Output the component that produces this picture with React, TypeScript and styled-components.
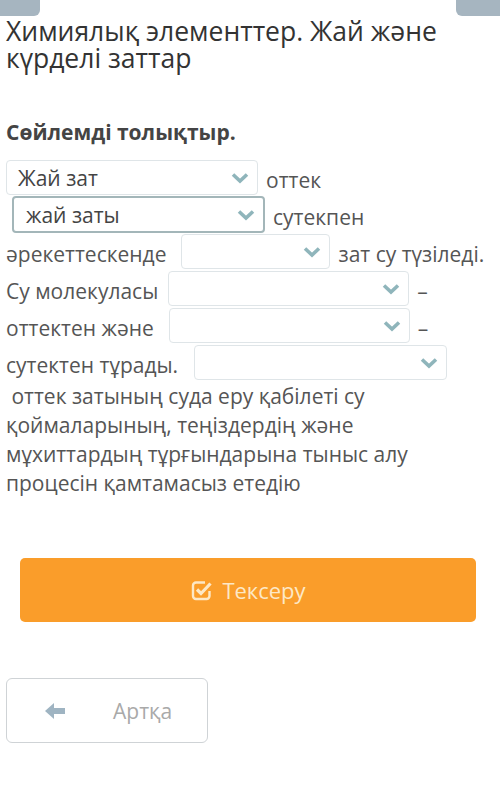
import React from "react";
import styled, { createGlobalStyle } from "styled-components";

const GlobalStyle = createGlobalStyle`
  html, body {
    margin: 0;
    padding: 0;
    background: #fff;
  }
  body {
    font-family: "Open Sans", "Noto Sans", "DejaVu Sans", sans-serif;
    color: #4a4a4a;
  }
`;

const Page = styled.div`
  width: 500px;
  min-height: 806px;
  overflow: hidden;
`;

const TopBar = styled.div`
  display: flex;
  justify-content: space-between;
  height: 16px;
`;

const Corner = styled.div<{ side: "left" | "right" }>`
  width: ${(p) => (p.side === "left" ? 40 : 44)}px;
  height: 16px;
  background: #a6b5c0;
  border-bottom-${(p) => (p.side === "left" ? "right" : "left")}-radius: 6px;
`;

const Title = styled.h1`
  margin: 2px 0 0;
  padding: 0 6px;
  font-size: 26.5px;
  line-height: 27px;
  font-weight: 400;
  color: #333;
`;

const Task = styled.h2`
  margin: 47px 0 0;
  padding: 0 6px;
  font-size: 21px;
  line-height: 26px;
  font-weight: 700;
  color: #444;
`;

const Sentence = styled.div`
  margin-top: 14px;
  padding: 0 6px;
  font-size: 21px;
  color: #555;
`;

const Line = styled.div<{ indent?: number }>`
  display: flex;
  align-items: center;
  gap: 8px;
  height: 37px;
  padding-left: ${(p) => p.indent ?? 0}px;
`;

const Word = styled.span<{ after?: number }>`
  white-space: nowrap;
  line-height: 28px;
  padding-top: 4px;
  margin-right: ${(p) => p.after ?? 0}px;
`;

const SelectBox = styled.div<{ w: number; focused?: boolean }>`
  box-sizing: border-box;
  display: flex;
  align-items: center;
  justify-content: space-between;
  width: ${(p) => p.w}px;
  height: ${(p) => (p.focused ? 37 : 35)}px;
  padding: 0 8px 0 ${(p) => (p.focused ? 12 : 11)}px;
  border: ${(p) => (p.focused ? "2px solid #a3b6b9" : "1px solid #dfe5e8")};
  border-radius: 4px;
  background: #fff;
  color: #444;
  font-size: 21px;
  flex-shrink: 0;
`;

const Paragraph = styled.p`
  margin: 1px 0 0;
  padding: 0 6px;
  font-size: 21px;
  line-height: 29px;
  color: #555;
`;

const CheckButton = styled.button`
  display: flex;
  align-items: center;
  justify-content: center;
  gap: 9px;
  width: 456px;
  height: 64px;
  margin: 60px 0 0 20px;
  border: none;
  border-radius: 5px;
  background: #fa9d2a;
  color: #fde8c6;
  font-family: inherit;
  font-size: 22px;
`;

const BackButton = styled.button`
  box-sizing: border-box;
  display: flex;
  align-items: center;
  width: 202px;
  height: 65px;
  margin: 56px 0 0 6px;
  padding: 0 0 0 37px;
  border: 1px solid #cfd3d6;
  border-radius: 6px;
  background: #fff;
  color: #a9a9a9;
  font-family: inherit;
  font-size: 21px;
`;

const Chevron = () => (
  <svg width="18" height="12" viewBox="0 0 18 12">
    <polyline
      points="2,2.5 9,9 16,2.5"
      fill="none"
      stroke="#8fb5bb"
      strokeWidth="3.6"
      strokeLinejoin="miter"
    />
  </svg>
);

const CheckSquare = () => (
  <svg width="23" height="23" viewBox="0 0 23 23">
    <path
      d="M15 3.5 H6 A3 3 0 0 0 3 6.5 V17 A3 3 0 0 0 6 20 H16.5 A3 3 0 0 0 19.5 17 V12"
      fill="none"
      stroke="currentColor"
      strokeWidth="2.4"
    />
    <polyline
      points="7,10.5 11,14.5 20.5,4.5"
      fill="none"
      stroke="currentColor"
      strokeWidth="3.2"
    />
  </svg>
);

const ArrowLeft = () => (
  <svg width="22" height="18" viewBox="0 0 22 18" style={{ marginRight: 47 }}>
    <path d="M1 9 L10 1 V6 H21 V12 H10 V17 Z" fill="#9fb4c2" />
  </svg>
);

type SelProps = { w: number; value?: string; focused?: boolean };

const Dropdown = ({ w, value = "", focused }: SelProps) => (
  <SelectBox w={w} focused={focused}>
    <span>{value}</span>
    <Chevron />
  </SelectBox>
);

export default function App() {
  return (
    <Page>
      <GlobalStyle />
      <TopBar>
        <Corner side="left" />
        <Corner side="right" />
      </TopBar>
      <Title>Химиялық элементтер. Жай және күрделі заттар</Title>
      <Task>Сөйлемді толықтыр.</Task>
      <Sentence>
        <Line>
          <Dropdown w={252} value="Жай зат" />
          <Word>оттек</Word>
        </Line>
        <Line indent={6}>
          <Dropdown w={253} value="жай заты" focused />
          <Word>сутекпен</Word>
        </Line>
        <Line>
          <Word after={7}>әрекеттескенде</Word>
          <Dropdown w={149} />
          <Word>зат су түзіледі.</Word>
        </Line>
        <Line>
          <Word after={2}>Су молекуласы</Word>
          <Dropdown w={241} />
          <Word>–</Word>
        </Line>
        <Line>
          <Word after={7}>оттектен және</Word>
          <Dropdown w={241} />
          <Word>–</Word>
        </Line>
        <Line>
          <Word after={8}>сутектен тұрады.</Word>
          <Dropdown w={253} />
        </Line>
      </Sentence>
      <Paragraph>
        &nbsp;оттек затының суда еру қабілеті су қоймаларының, теңіздердің және
        мұхиттардың тұрғындарына тыныс алу процесін қамтамасыз етедію
      </Paragraph>
      <CheckButton>
        <CheckSquare />
        <span>Тексеру</span>
      </CheckButton>
      <BackButton>
        <ArrowLeft />
        <span>Артқа</span>
      </BackButton>
    </Page>
  );
}
